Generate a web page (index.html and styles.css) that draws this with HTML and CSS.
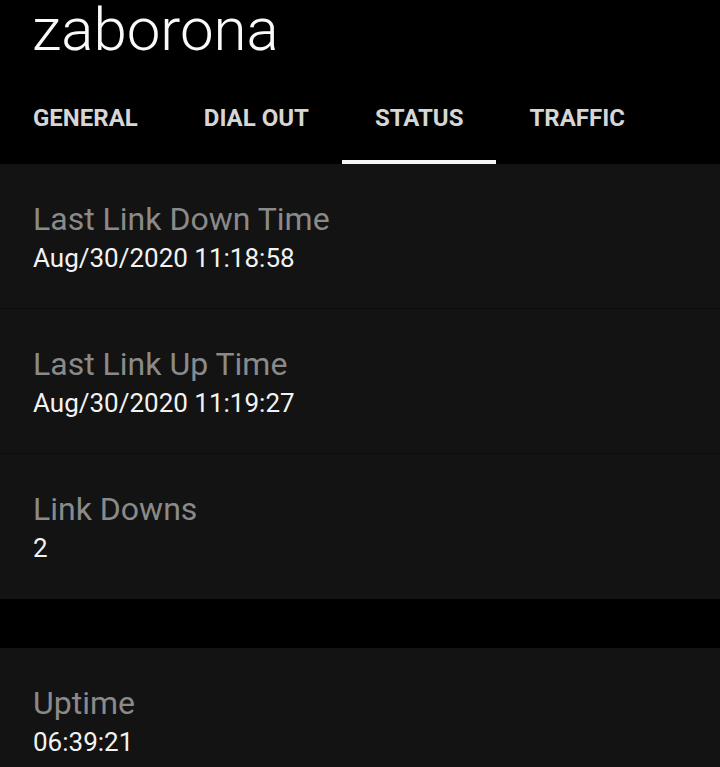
FILE: index.html
```html
<!DOCTYPE html>
<html lang="en">
<head>
  <meta charset="UTF-8" />
  <meta name="viewport" content="width=device-width, initial-scale=1.0" />
  <title>zaborona</title>
  <link rel="stylesheet" href="styles.css">
</head>
<body>
  <div class="header">
    <div class="title">zaborona</div>
    <div class="tabs">
      <div class="tab">GENERAL</div>
      <div class="tab">DIAL OUT</div>
      <div class="tab active">STATUS</div>
      <div class="tab">TRAFFIC</div>
    </div>
  </div>

  <div class="group">
    <div class="row">
      <div class="label">Last Link Down Time</div>
      <div class="value">Aug/30/2020 11:18:58</div>
    </div>
    <div class="row">
      <div class="label">Last Link Up Time</div>
      <div class="value">Aug/30/2020 11:19:27</div>
    </div>
    <div class="row">
      <div class="label">Link Downs</div>
      <div class="value">2</div>
    </div>
  </div>

  <div class="group">
    <div class="row">
      <div class="label">Uptime</div>
      <div class="value">06:39:21</div>
    </div>
  </div>
</body>
</html>
```

FILE: styles.css
```css
body {
  margin: 0;
  background-color: black;
  color: #f2f2f2;
  font-family: Roboto, "Noto Sans", sans-serif;
  overflow: hidden;
}
.header {
  background-color: black;
}
.title {
  font-size: 60px;
  font-weight: 300;
  line-height: 59px;
  padding-left: 32px;
  color: #fafafa;
}
.tabs {
  display: flex;
  height: 105px;
}
.tab {
  box-sizing: border-box;
  height: 105px;
  padding: 47px 33px 0;
  font-size: 24px;
  font-weight: 700;
  line-height: 24px;
  color: #d6d6d6;
  border-bottom: 4px solid transparent;
}
.tab.active {
  border-bottom-color: #f5f5f5;
}
.group {
  background-color: #131313;
  margin-bottom: 49px;
}
.row {
  box-sizing: border-box;
  height: 145px;
  padding: 37px 33px 0;
  border-bottom: 1px solid #0c0c0c;
}
.group .row:last-child {
  border-bottom: none;
}
.label {
  font-size: 32px;
  line-height: 36px;
  color: #8a8a8a;
}
.value {
  font-size: 26px;
  line-height: 30px;
  margin-top: 6px;
  color: #f2f2f2;
}
```
